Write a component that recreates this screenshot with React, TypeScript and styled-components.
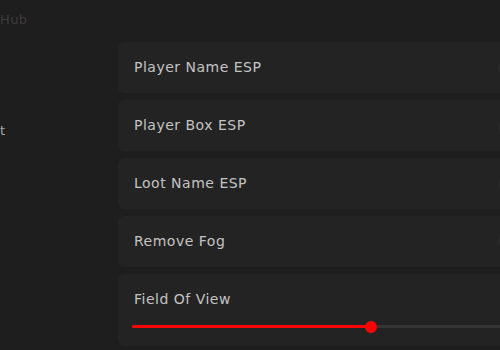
import styled, { createGlobalStyle } from 'styled-components'

/**
 * Style
 */
const GlobalStyle = createGlobalStyle`
  html, body {
    margin: 0;
    padding: 0;
    background: #1e1e1e;
    overflow: hidden;
  }
  body {
    font-family: "DejaVu Sans", "Liberation Sans", sans-serif;
  }
`

const Window = styled.div`
  display: flex;
  width: 500px;
  height: 350px;
  overflow: hidden;
  background: #1e1e1e;
`

const Sidebar = styled.aside`
  flex: 0 0 118px;
  display: flex;
  flex-direction: column;
  overflow: hidden;
`

const Brand = styled.div`
  margin-top: 12px;
  font-size: 13px;
  letter-spacing: 0.4px;
  color: #3c3c3c;
  white-space: nowrap;
`

const NavItem = styled.div<{ $active?: boolean }>`
  margin-top: 96px;
  font-size: 13px;
  color: ${p => (p.$active ? '#a8a8a8' : '#6a6a6a')};
  white-space: nowrap;
`

const Content = styled.main`
  flex: 0 0 432px;
  display: flex;
  flex-direction: column;
  gap: 7px;
  padding-top: 42px;
`

const Card = styled.div<{ $tall?: boolean }>`
  display: flex;
  flex-direction: ${p => (p.$tall ? 'column' : 'row')};
  justify-content: ${p => (p.$tall ? 'flex-start' : 'space-between')};
  align-items: ${p => (p.$tall ? 'stretch' : 'center')};
  height: ${p => (p.$tall ? '72px' : '51px')};
  box-sizing: border-box;
  padding: ${p => (p.$tall ? '18px 0 0 16px' : '0 16px')};
  background: #232323;
  border-radius: 6px;
`

const Label = styled.span`
  font-size: 14px;
  letter-spacing: 0.5px;
  color: #c4c4c4;
  line-height: 17px;
  margin-top: -1px;
`

const Toggle = styled.div`
  width: 36px;
  height: 14px;
  border-radius: 7px;
  background: #2b2b2b;
`

const SliderTrack = styled.div`
  position: relative;
  margin: 17px 0 0 -2px;
  height: 3px;
  background: #353535;
  border-radius: 2px;
`

const SliderFill = styled.div`
  height: 100%;
  background: #ff0000;
  border-radius: 2px;
`

const SliderThumb = styled.div`
  position: absolute;
  top: 50%;
  width: 12px;
  height: 12px;
  margin-left: -6px;
  margin-top: -6px;
  border-radius: 50%;
  background: #ff0000;
`

/**
 * Data
 */
const toggles = ['Player Name ESP', 'Player Box ESP', 'Loot Name ESP', 'Remove Fog']
const fovPercent = 57.1

/**
 * Component
 */
const App = (): JSX.Element => {
  return (
    <Window>
      <GlobalStyle />
      <Sidebar>
        <Brand>Hub</Brand>
        <NavItem $active>t</NavItem>
      </Sidebar>
      <Content>
        {toggles.map(label => (
          <Card key={label}>
            <Label>{label}</Label>
            <Toggle />
          </Card>
        ))}
        <Card $tall>
          <Label>Field Of View</Label>
          <SliderTrack>
            <SliderFill style={{ width: `${fovPercent}%` }} />
            <SliderThumb style={{ left: `${fovPercent}%` }} />
          </SliderTrack>
        </Card>
      </Content>
    </Window>
  )
}

export default App
